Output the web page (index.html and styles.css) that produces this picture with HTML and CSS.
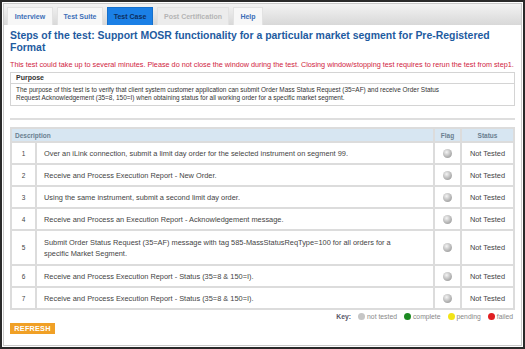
FILE: index.html
```html
<!DOCTYPE html>
<html>
<head>
<meta charset="utf-8">
<link rel="stylesheet" href="styles.css">
</head>
<body>
<div class="frame">
  <div class="panel">
    <div class="tabbar">
      <div class="tab">Interview</div>
      <div class="tab">Test Suite</div>
      <div class="tab active">Test Case</div>
      <div class="tab disabled">Post Certification</div>
      <div class="tab">Help</div>
    </div>
    <div class="content">
      <h1 class="title">Steps of the test: Support MOSR functionality for a particular market segment for Pre-Registered Format</h1>
      <p class="warn">This test could take up to several minutes. Please do not close the window during the test. Closing window/stopping test requires to rerun the test from step1.</p>
      <div class="purpose">
        <div class="purpose-head">Purpose</div>
        <div class="purpose-body">The purpose of this test is to verify that client system customer application can submit Order Mass Status Request (35=AF) and receive Order Status Request Acknowledgement (35=8, 150=I) when obtaining status for all working order for a specific market segment.</div>
      </div>
      <div class="sep"></div>
      <table class="steps">
        <thead>
          <tr><th colspan="2" class="th-desc">Description</th><th class="th-c">Flag</th><th class="th-c">Status</th></tr>
        </thead>
        <tbody>
          <tr><td class="num">1</td><td class="desc">Over an iLink connection, submit a limit day order for the selected instrument on segment 99.</td><td class="flag"><span class="dot"></span></td><td class="status">Not Tested</td></tr>
          <tr><td class="num">2</td><td class="desc">Receive and Process Execution Report - New Order.</td><td class="flag"><span class="dot"></span></td><td class="status">Not Tested</td></tr>
          <tr><td class="num">3</td><td class="desc">Using the same instrument, submit a second limit day order.</td><td class="flag"><span class="dot"></span></td><td class="status">Not Tested</td></tr>
          <tr><td class="num">4</td><td class="desc">Receive and Process an Execution Report - Acknowledgement message.</td><td class="flag"><span class="dot"></span></td><td class="status">Not Tested</td></tr>
          <tr class="tall"><td class="num">5</td><td class="desc">Submit Order Status Request (35=AF) message with tag 585-MassStatusReqType=100 for all orders for a specific Market Segment.</td><td class="flag"><span class="dot"></span></td><td class="status">Not Tested</td></tr>
          <tr><td class="num">6</td><td class="desc">Receive and Process Execution Report - Status (35=8 &amp; 150=I).</td><td class="flag"><span class="dot"></span></td><td class="status">Not Tested</td></tr>
          <tr><td class="num">7</td><td class="desc">Receive and Process Execution Report - Status (35=8 &amp; 150=I).</td><td class="flag"><span class="dot"></span></td><td class="status">Not Tested</td></tr>
        </tbody>
      </table>
      <div class="key">
        <b>Key:</b>
        <span class="k"><span class="kd gray"></span>not tested</span>
        <span class="k"><span class="kd green"></span>complete</span>
        <span class="k"><span class="kd yellow"></span>pending</span>
        <span class="k"><span class="kd red"></span>failed</span>
      </div>
      <button class="refresh">REFRESH</button>
    </div>
  </div>
</div>
</body>
</html>
```

FILE: styles.css
```css
* { box-sizing: border-box; }
html, body { margin: 0; padding: 0; }
body {
  width: 525px;
  height: 349px;
  overflow: hidden;
  font-family: "Liberation Sans", Arial, sans-serif;
  background: #fff;
}
.frame {
  width: 525px;
  height: 349px;
  border: 2px solid #2a2a2a;
  padding: 1px;
  background: #fff;
}
.panel {
  height: 100%;
  border: 1px solid #c9c9c9;
  background: #fff;
}
.tabbar {
  height: 21px;
  background: linear-gradient(#f3f3f3, #d8d8d8);
  display: flex;
  align-items: flex-end;
  gap: 4px;
  padding-left: 3px;
}
.tab {
  height: 18px;
  padding: 0;
  display: flex;
  align-items: center;
  justify-content: center;
  white-space: nowrap;
  font-size: 7px;
  font-weight: bold;
  color: #3d6fb8;
  background: #f7f7f7;
  border: 1px solid #e2e2e2;
  border-bottom: none;
  width: 46px;
}
.tab.active { background: #1b80e6; color: #0d2e5e; border-color: #1570cc; }
.tab.disabled { width: 72px; color: #b4b4b4; background: #ececec; }
.tab:nth-child(5) { width: 30px; }
.content { padding: 0 6px; }
.title {
  margin: 5px 0 0;
  font-size: 10.45px;
  line-height: 12px;
  font-weight: bold;
  color: #1e5b9f;
}
.warn {
  margin: 6px 0 0;
  font-size: 7.25px;
  line-height: 9px;
  color: #d0243e;
}
.purpose {
  margin-top: 3px;
  border: 1px solid #d4d4d4;
}
.purpose-head {
  font-size: 7px;
  font-weight: bold;
  color: #333;
  padding: 1px 5px;
  height: 11px;
  border-bottom: 1px solid #d4d4d4;
}
.purpose-body {
  font-size: 6.45px;
  line-height: 8px;
  color: #333;
  padding: 2px 62px 3px 5px;
}
.sep {
  margin-top: 12px;
  height: 2px;
  background: #dedede;
}
.steps {
  margin-top: 7px;
  width: 100%;
  border-collapse: separate;
  border-spacing: 2px;
  background: #dcdcdc;
  font-size: 7.4px;
  color: #444;
}
.steps th {
  background: #d7e6f2;
  color: #6a7f90;
  font-weight: bold;
  font-size: 6.5px;
  height: 12px;
  padding: 0 3px;
}
.th-desc { text-align: left; }
.th-c { text-align: center; }
.steps td { background: #fff; height: 20px; padding: 0; }
.steps tr.tall td { height: 33px; }
.num { width: 23px; text-align: center; font-size: 6.5px; }
.desc { padding: 0 28px 0 7px !important; line-height: 11px; }
.flag { width: 25px; text-align: center; }
.status { width: 51px; text-align: center; white-space: nowrap; }
.dot {
  display: inline-block;
  width: 9px;
  height: 9px;
  border-radius: 50%;
  background: radial-gradient(circle at 40% 35%, #f4f4f4, #b8b8b8 55%, #8a8a8a);
  vertical-align: middle;
}
.key {
  margin-top: 3px;
  display: flex;
  justify-content: flex-end;
  align-items: center;
  gap: 7px;
  font-size: 6.8px;
  color: #888;
  padding-right: 2px;
}
.key b { color: #556; }
.k { display: inline-flex; align-items: center; gap: 2px; }
.kd { width: 7px; height: 7px; border-radius: 50%; display: inline-block; }
.kd.gray { background: #c6c6c6; }
.kd.green { background: #1c8a22; }
.kd.yellow { background: #f2e418; }
.kd.red { background: #e01f22; }
.refresh {
  display: block;
  margin-top: 3px;
  border: none;
  background: #f0a026;
  color: #fff;
  font-family: "Liberation Sans", Arial, sans-serif;
  font-weight: bold;
  font-size: 7.3px;
  height: 11px;
  width: 45px;
  padding: 0;
  letter-spacing: 0.2px;
}
```
